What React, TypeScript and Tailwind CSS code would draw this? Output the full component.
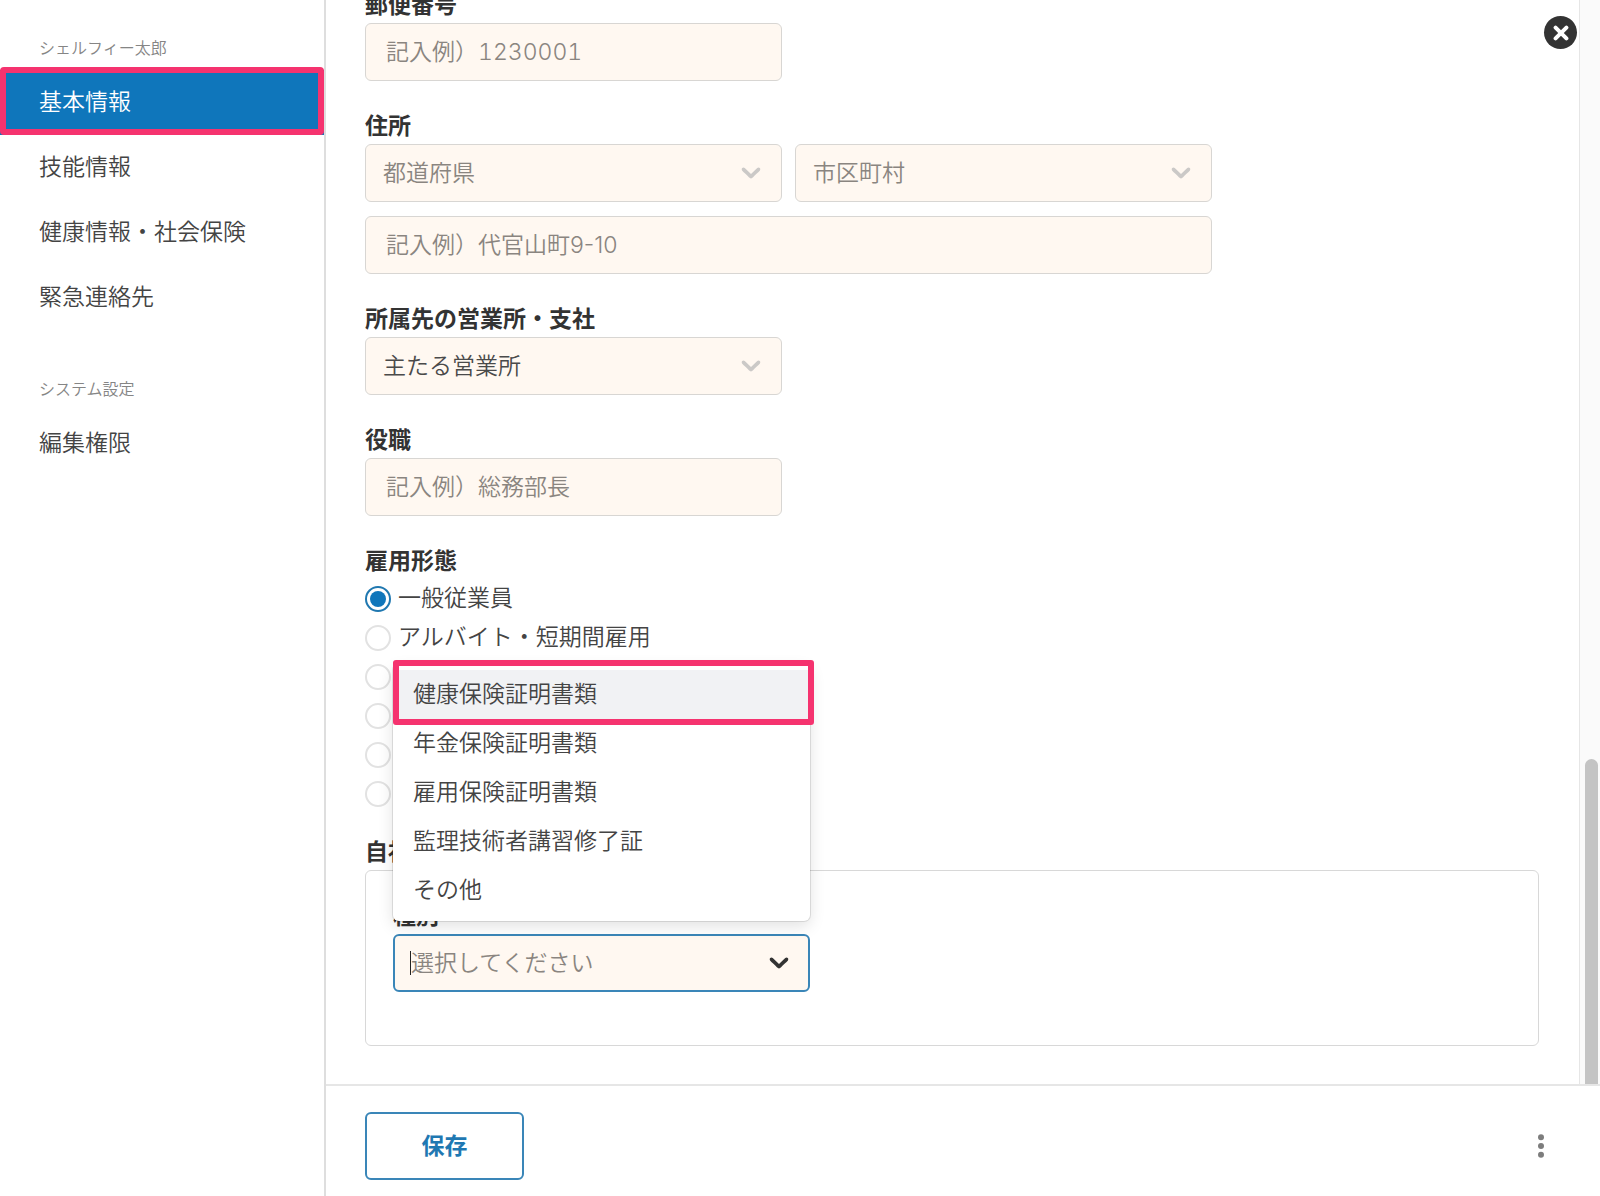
import React from "react";

const fieldBase =
  "block h-[58px] w-full rounded-md border border-[#d8d6d3] bg-[#fff8f1] text-[23px] leading-8 text-[#4a4a4a] outline-none placeholder:text-[#8a8580] placeholder:opacity-100";

function Chevron({ className }: { className: string }) {
  return (
    <svg
      viewBox="0 0 20 20"
      className={`pointer-events-none absolute top-0 right-[15px] bottom-0.5 my-auto size-8 fill-current ${className}`}
      aria-hidden="true"
    >
      <path d="M4.516 7.548c0.436-0.446 1.043-0.481 1.576 0l3.908 3.747 3.908-3.747c0.533-0.481 1.141-0.446 1.574 0 0.436 0.445 0.408 1.197 0 1.615-0.406 0.418-4.695 4.502-4.695 4.502-0.217 0.223-0.502 0.335-0.787 0.335s-0.57-0.112-0.789-0.335c0 0-4.287-4.084-4.695-4.502s-0.436-1.17 0-1.615z" />
    </svg>
  );
}

function Label({ htmlFor, children }: { htmlFor: string; children: React.ReactNode }) {
  return (
    <label htmlFor={htmlFor} className="block text-[23px] leading-9 font-bold text-[#333]">
      {children}
    </label>
  );
}

function TextField({
  id,
  placeholder,
  label,
  numeric,
}: {
  id: string;
  placeholder: string;
  label?: string;
  numeric?: boolean;
}) {
  return (
    <input
      id={id}
      type="text"
      aria-label={label}
      placeholder={placeholder}
      className={`${fieldBase} px-5 ${numeric ? "tabular-nums" : ""}`}
    />
  );
}

function SelectField({ id, value, muted, label }: { id: string; value: string; muted?: boolean; label?: string }) {
  return (
    <div className="relative w-full">
      <select
        id={id}
        aria-label={label}
        className={`${fieldBase} appearance-none px-[17px] ${muted ? "text-[#8a8580]!" : ""}`}
      >
        <option>{value}</option>
      </select>
      <Chevron className="text-[#cbc9c7]" />
    </div>
  );
}

function NavItem({ children, active }: { children: React.ReactNode; active?: boolean }) {
  return (
    <li className="relative">
      <a
        href="#"
        aria-current={active ? "page" : undefined}
        className={`flex h-[65px] items-center px-[39px] text-[23px] ${
          active ? "bg-[#0f76bb] text-white" : "text-[#444]"
        }`}
      >
        {children}
      </a>
      {active && (
        <span className="pointer-events-none absolute inset-x-0 -top-[3px] bottom-0 rounded-[4px] border-[6px] border-[#f5336f]" />
      )}
    </li>
  );
}

const employment = [
  { id: "regular", name: "一般従業員" },
  { id: "part-time", name: "アルバイト・短期間雇用" },
  { id: "type-3" },
  { id: "type-4" },
  { id: "type-5" },
  { id: "type-6" },
];
const certificates = [
  "健康保険証明書類",
  "年金保険証明書類",
  "雇用保険証明書類",
  "監理技術者講習修了証",
  "その他",
];

export default function App() {
  return (
    <div className="flex h-screen bg-white font-['Inter','Noto_Sans_CJK_JP',sans-serif] font-[350] text-[#444]">
      <nav className="w-[326px] shrink-0 border-r-2 border-[#dedede] pt-7">
        <h2 className="px-[39px] pb-0.5 text-base leading-10 text-[#858585]">シェルフィー太郎</h2>
        <ul className="mb-[39px]">
          <NavItem active>基本情報</NavItem>
          <NavItem>技能情報</NavItem>
          <NavItem>健康情報・社会保険</NavItem>
          <NavItem>緊急連絡先</NavItem>
        </ul>
        <h2 className="px-[39px] pb-0.5 text-base leading-10 text-[#858585]">システム設定</h2>
        <ul>
          <NavItem>編集権限</NavItem>
        </ul>
      </nav>

      <div className="relative flex min-w-0 flex-1 flex-col">
        <div className="flex min-h-0 flex-1">
          <main className="flex min-w-0 flex-1 flex-col justify-end overflow-hidden pr-10 pb-[38px] pl-[39px]">
            <form className="flex flex-col gap-[27px]">
              <div className="w-[417px]">
                <Label htmlFor="zip">郵便番号</Label>
                <TextField id="zip" placeholder="記入例）1230001" numeric />
              </div>

              <div className="w-[847px]">
                <Label htmlFor="prefecture">住所</Label>
                <div className="mb-3.5 grid grid-cols-2 gap-[13px]">
                  <SelectField id="prefecture" value="都道府県" muted />
                  <SelectField id="city" value="市区町村" label="市区町村" muted />
                </div>
                <TextField id="street" label="番地" placeholder="記入例）代官山町9-10" />
              </div>

              <div className="w-[417px]">
                <Label htmlFor="office">所属先の営業所・支社</Label>
                <SelectField id="office" value="主たる営業所" />
              </div>

              <div className="w-[417px]">
                <Label htmlFor="position">役職</Label>
                <TextField id="position" placeholder="記入例）総務部長" />
              </div>

              <fieldset>
                <legend className="block text-[23px] leading-9 font-bold text-[#333]">雇用形態</legend>
                {employment.map(({ id, name }, i) => (
                  <label key={id} className="flex h-[39px] items-center gap-[7px] text-[23px]">
                    <input
                      type="radio"
                      name="employment"
                      value={id}
                      aria-label={name ?? "雇用形態"}
                      defaultChecked={i === 0}
                      className="size-[26px] shrink-0 appearance-none rounded-full border-2 border-[#e2e2e2] bg-white checked:border-[#2078b0] checked:bg-[#0f76bb] checked:bg-clip-content checked:p-[3px]"
                    />
                    {name}
                  </label>
                ))}
              </fieldset>

              <section className="-mt-1.5">
                <h3 className="text-[23px] leading-9 font-bold text-[#333]">自社</h3>
                <div className="rounded-md border border-[#d8d8d8] px-[27px] pt-[27px] pb-[53px]">
                  <div className="w-[417px]">
                    <Label htmlFor="kind">種別</Label>
                    <div className="relative">
                      <input
                        id="kind"
                        type="text"
                        role="combobox"
                        aria-expanded="true"
                        aria-controls="kind-options"
                        placeholder="選択してください"
                        className={`${fieldBase} border-2! border-[#3a86b8]! px-4`}
                      />
                      <span className="absolute inset-y-0 left-[17px] my-auto h-6 w-px bg-[#222]" />
                      <Chevron className="text-[#333]" />
                      <div className="absolute inset-x-0 bottom-full mb-[13px] rounded-md bg-white py-1.5 shadow-[0_0_0_1px_rgba(0,0,0,0.1),0_5px_16px_rgba(0,0,0,0.12)]">
                        <ul id="kind-options" role="listbox">
                          {certificates.map((name, i) => (
                            <li
                              key={name}
                              role="option"
                              aria-selected={i === 0}
                              className={`flex h-[49px] items-center px-5 text-[23px] ${
                                i === 0 ? "bg-[#f1f2f4]" : ""
                              }`}
                            >
                              {name}
                            </li>
                          ))}
                        </ul>
                        <span className="pointer-events-none absolute -top-1 -right-1 left-0 h-[65px] rounded-[3px] border-[6px] border-[#f5336f]" />
                      </div>
                    </div>
                  </div>
                </div>
              </section>
            </form>
          </main>

          <div className="flex w-[21px] shrink-0 flex-col justify-end border-l border-[#e6e6e6] bg-[#fafafa] pr-0.5 pl-[5px]">
            <div className="h-[30%] rounded-t-full bg-[#c4c4c4]" />
          </div>
        </div>

        <footer className="flex items-center justify-between border-t-2 border-[#e6e6e6] pt-[26px] pr-[47px] pb-4 pl-[39px]">
          <button
            type="button"
            className="h-[68px] w-[159px] rounded-md border-2 border-[#3a86b8] text-[23px] font-bold text-[#1f78b2]"
          >
            保存
          </button>
          <button type="button" aria-label="メニュー">
            <svg viewBox="0 0 24 24" className="size-6 fill-[#7d7d7d]" aria-hidden="true">
              <circle cx="12" cy="3.2" r="3" />
              <circle cx="12" cy="12" r="3" />
              <circle cx="12" cy="20.8" r="3" />
            </svg>
          </button>
        </footer>

        <button
          type="button"
          aria-label="閉じる"
          className="absolute top-4 right-[23px] flex size-[33px] items-center justify-center rounded-full bg-[#333]"
        >
          <svg viewBox="0 0 16 16" className="size-4" stroke="#fff" strokeWidth="4" strokeLinecap="round" aria-hidden="true">
            <path d="M2.6 2.6 13.4 13.4M13.4 2.6 2.6 13.4" />
          </svg>
        </button>
      </div>
    </div>
  );
}
